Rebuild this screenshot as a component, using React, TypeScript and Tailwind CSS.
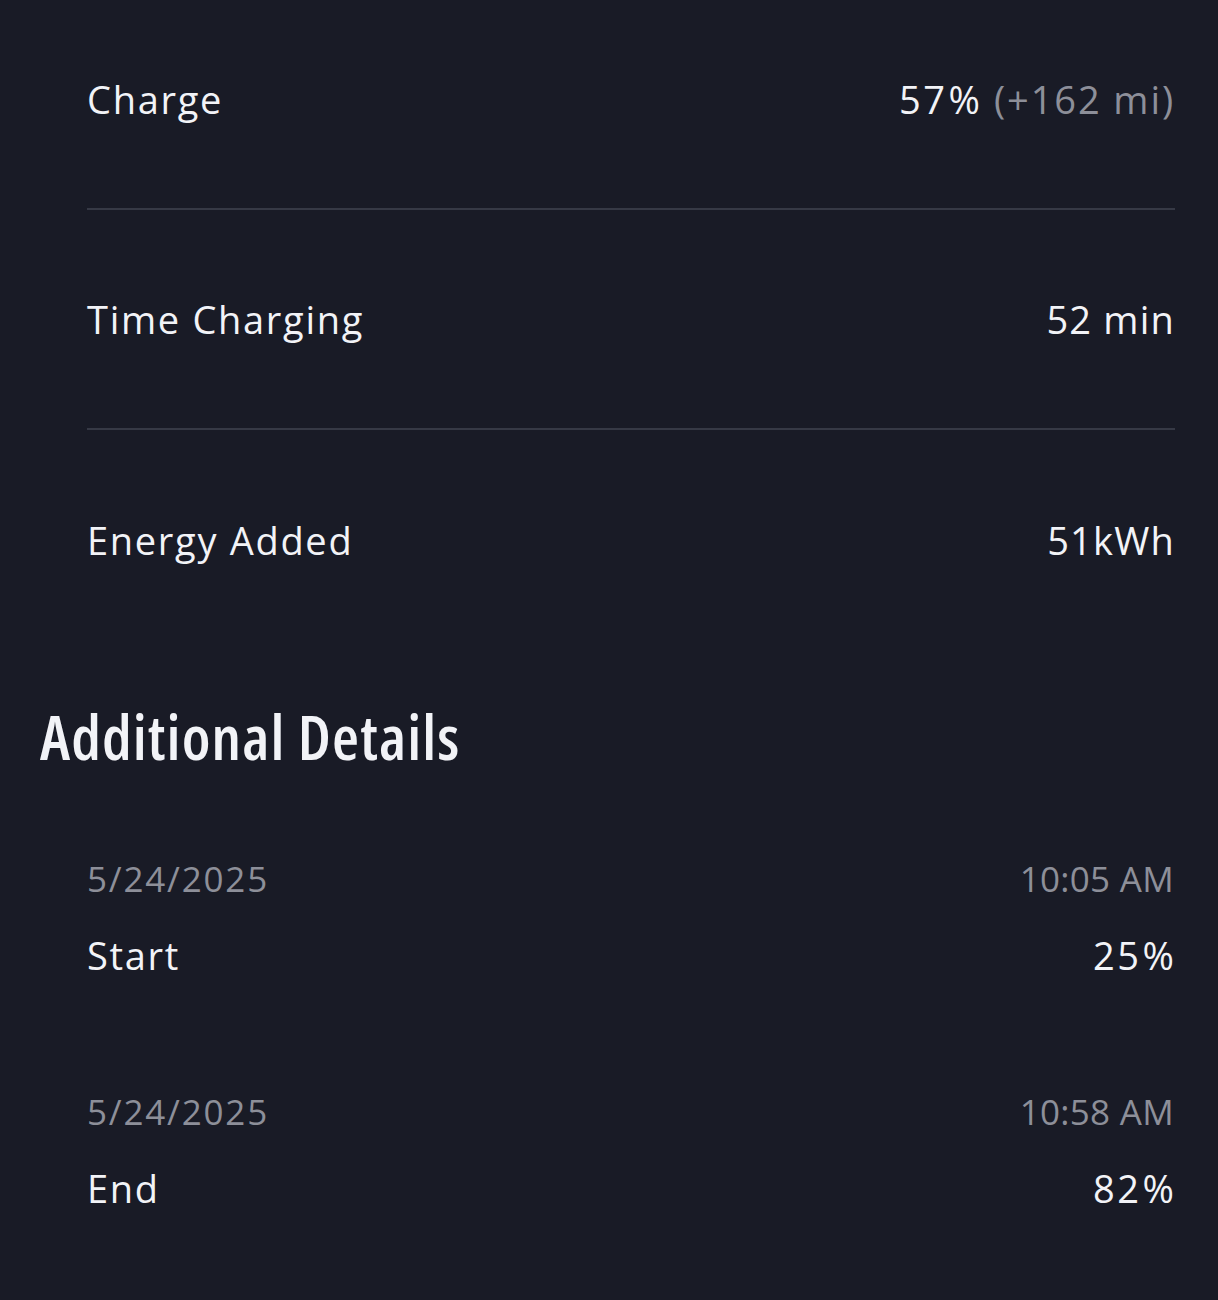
import React from 'react';

const rows = [
  { label: 'Charge', value: '57', pct: true, extra: '(+162 mi)' },
  { label: 'Time Charging', value: '52 min' },
  { label: 'Energy Added', value: '51kWh' },
];

const events = [
  { date: '5/24/2025', time: '10:05 AM', label: 'Start', value: '25' },
  { date: '5/24/2025', time: '10:58 AM', label: 'End', value: '82' },
];

const Pct = ({ n }: { n: string }) => (
  <span>
    <span className="tracking-[2.5px]">{n}</span>
    <span className="ml-[1px] tracking-normal">%</span>
  </span>
);

export default function App() {
  return (
    <div
      className="min-h-[1300px] w-full bg-[#191b26] text-[#f2f3f7] overflow-hidden"
      style={{ fontFamily: '"Open Sans", "Noto Sans", sans-serif' }}
    >
      {/* Summary rows */}
      <div className="ml-[87px] mr-[43px] -mt-[10px]">
        {rows.map((r, i) => (
          <div
            key={r.label}
            className={`flex items-center justify-between h-[220px] ${
              i < rows.length - 1 ? 'border-b-2 border-[#363945]' : ''
            }`}
          >
            <span className="text-[38px] leading-none tracking-[1.7px]">{r.label}</span>
            <span className="text-[38px] leading-none tracking-[1.2px]">
              {r.pct ? <Pct n={r.value} /> : r.value}
              {r.extra && (
                <span className="text-[#8d8f99] ml-[14px] tracking-[1.9px]">{r.extra}</span>
              )}
            </span>
          </div>
        ))}
      </div>

      {/* Additional details */}
      <h2 className="ml-[40px] mt-[55px] text-[62px] font-semibold leading-none tracking-[1.1px] [font-stretch:condensed]">
        Additional Details
      </h2>

      <div className="ml-[87px] mr-[44px] mt-[94px] flex flex-col gap-[120px]">
        {events.map((e) => (
          <div key={e.label} className="flex flex-col gap-[40px]">
            <div className="flex justify-between text-[35px] leading-none text-[#8d8f99]">
              <span className="tracking-[1.8px]">{e.date}</span>
              <span className="tracking-[0.3px]">{e.time}</span>
            </div>
            <div className="flex justify-between text-[38px] leading-none">
              <span className="tracking-[1.7px]">{e.label}</span>
              <span>
                <Pct n={e.value} />
              </span>
            </div>
          </div>
        ))}
      </div>
    </div>
  );
}
